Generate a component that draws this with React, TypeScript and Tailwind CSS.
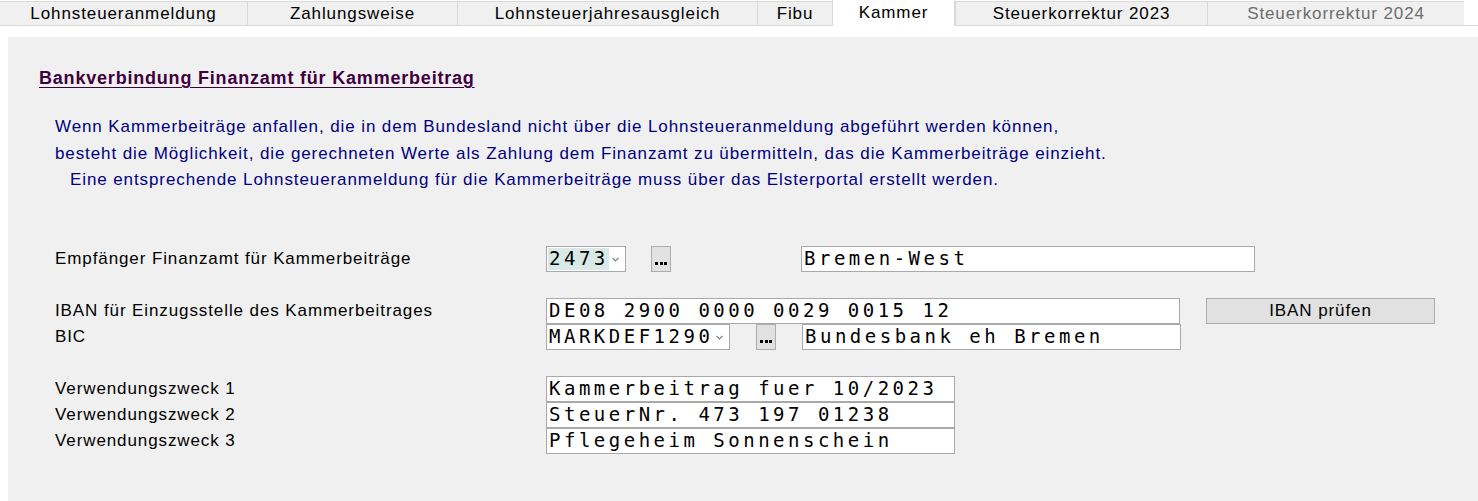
import React from 'react';

const tabs = [
  { label: 'Lohnsteueranmeldung', w: 'w-[247px]' },
  { label: 'Zahlungsweise', w: 'w-[210px]' },
  { label: 'Lohnsteuerjahresausgleich', w: 'w-[300px]' },
  { label: 'Fibu', w: 'w-[75px]' },
  { label: 'Kammer', w: 'w-[123px]', active: true },
  { label: 'Steuerkorrektur 2023', w: 'w-[252px]' },
  { label: 'Steuerkorrektur 2024', w: 'w-[257px]', disabled: true },
];

const sans = "font-['Liberation_Sans',Arial,sans-serif] text-[17px] tracking-[0.9px]";
const mono = "font-['DejaVu_Sans_Mono',monospace] text-[19px] tracking-[3.5px] text-black";

const Field: React.FC<{ value?: string; className?: string }> = ({ value, className }) => (
  <div className={`h-[26px] bg-white border border-[#a9a9a9] flex items-center pl-[2px] overflow-hidden whitespace-nowrap ${mono} ${className ?? ''}`}>
    {value}
  </div>
);

const Combo: React.FC<{ value: string; className?: string; highlight?: boolean }> = ({ value, className, highlight }) => (
  <div className={`h-[26px] bg-white border border-[#a9a9a9] flex items-center pl-px ${className ?? ''}`}>
    <span className={`h-[22px] flex items-center pl-px ${highlight ? 'bg-[#d8e9e6]' : ''} ${mono}`}>{value}</span>
    <svg className="ml-auto mr-[6px] mt-[2px]" width="7" height="5" viewBox="0 0 7 5">
      <path d="M0.5 0.8 L3.5 3.8 L6.5 0.8" fill="none" stroke="#7a7a7a" strokeWidth="1.2" />
    </svg>
  </div>
);

const DotsButton: React.FC = () => (
  <div className="w-[20px] h-[26px] bg-[#e1e1e1] border border-[#adadad] flex items-end justify-center pb-[6px]">
    <span className="flex gap-[1.5px]">
      <span className="w-[3px] h-[3px] bg-black" />
      <span className="w-[3px] h-[3px] bg-black" />
      <span className="w-[3px] h-[3px] bg-black" />
    </span>
  </div>
);

export default function App() {
  return (
    <div className="w-[1478px] h-[501px] bg-white flex flex-col overflow-hidden">
      {/* Tabs */}
      <div className="h-[26px] flex items-end border-b border-[#d9d9d9] shrink-0">
        {tabs.map((t) =>
          t.active ? (
            <div
              key={t.label}
              className={`${t.w} h-[27px] -mb-px bg-white border-x border-t border-[#d9d9d9] flex items-start justify-center ${sans} text-black`}
            >
              {t.label}
            </div>
          ) : (
            <div
              key={t.label}
              className={`${t.w} h-[24px] bg-[#f0f0f0] border-l border-t border-[#d9d9d9] first:border-l-0 flex items-center justify-center pt-[1px] ${sans} ${t.disabled ? 'text-[#6d6d6d]' : 'text-black'}`}
            >
              {t.label}
            </div>
          )
        )}
        <div className="flex-1" />
      </div>

      {/* Panel */}
      <div className="mt-[11px] ml-[8px] flex-1 bg-[#f0f0f0] flex flex-col">
        <div className="pt-[28px] pl-[31px]">
          <span className="font-['Liberation_Sans',Arial,sans-serif] text-[18px] font-bold tracking-[0.8px] text-[#400040] underline underline-offset-[3px]">
            Bankverbindung Finanzamt für Kammerbeitrag
          </span>
        </div>

        <div className={`mt-[22px] pl-[47px] text-[#000080] leading-[26.5px] ${sans}`}>
          <p>Wenn Kammerbeiträge anfallen, die in dem Bundesland nicht über die Lohnsteueranmeldung abgeführt werden können,</p>
          <p>besteht die Möglichkeit, die gerechneten Werte als Zahlung dem Finanzamt zu übermitteln, das die Kammerbeiträge einzieht.</p>
          <p className="pl-[15px]">Eine entsprechende Lohnsteueranmeldung für die Kammerbeiträge muss über das Elsterportal erstellt werden.</p>
        </div>

        <div className={`mt-[52px] pl-[47px] text-black ${sans}`}>
          {/* Finanzamt */}
          <div className="flex items-center h-[26px]">
            <span className="w-[491px]">Empfänger Finanzamt für Kammerbeiträge</span>
            <Combo value="2473" highlight className="w-[80px]" />
            <div className="ml-[25px]"><DotsButton /></div>
            <Field value="Bremen-West" className="ml-[130px] w-[454px]" />
          </div>

          {/* IBAN */}
          <div className="flex items-center h-[26px] mt-[26px]">
            <span className="w-[491px]">IBAN für Einzugsstelle des Kammerbeitrages</span>
            <Field value="DE08 2900 0000 0029 0015 12" className="w-[634px]" />
            <div className={`ml-[26px] w-[229px] h-[26px] bg-[#e1e1e1] border border-[#adadad] flex items-center justify-center ${sans}`}>
              IBAN prüfen
            </div>
          </div>

          {/* BIC */}
          <div className="flex items-center h-[26px]">
            <span className="w-[491px]">BIC</span>
            <Combo value="MARKDEF1290" className="w-[184px]" />
            <div className="ml-[26px]"><DotsButton /></div>
            <Field value="Bundesbank eh Bremen" className="ml-[26px] w-[379px]" />
          </div>

          {/* Verwendungszweck */}
          <div className="mt-[26px] flex flex-col">
            {[
              ['Verwendungszweck 1', 'Kammerbeitrag fuer 10/2023'],
              ['Verwendungszweck 2', 'SteuerNr. 473 197 01238'],
              ['Verwendungszweck 3', 'Pflegeheim Sonnenschein'],
            ].map(([label, value]) => (
              <div key={label} className="flex items-center h-[26px]">
                <span className="w-[491px]">{label}</span>
                <Field value={value} className="w-[409px]" />
              </div>
            ))}
          </div>
        </div>
      </div>
    </div>
  );
}
